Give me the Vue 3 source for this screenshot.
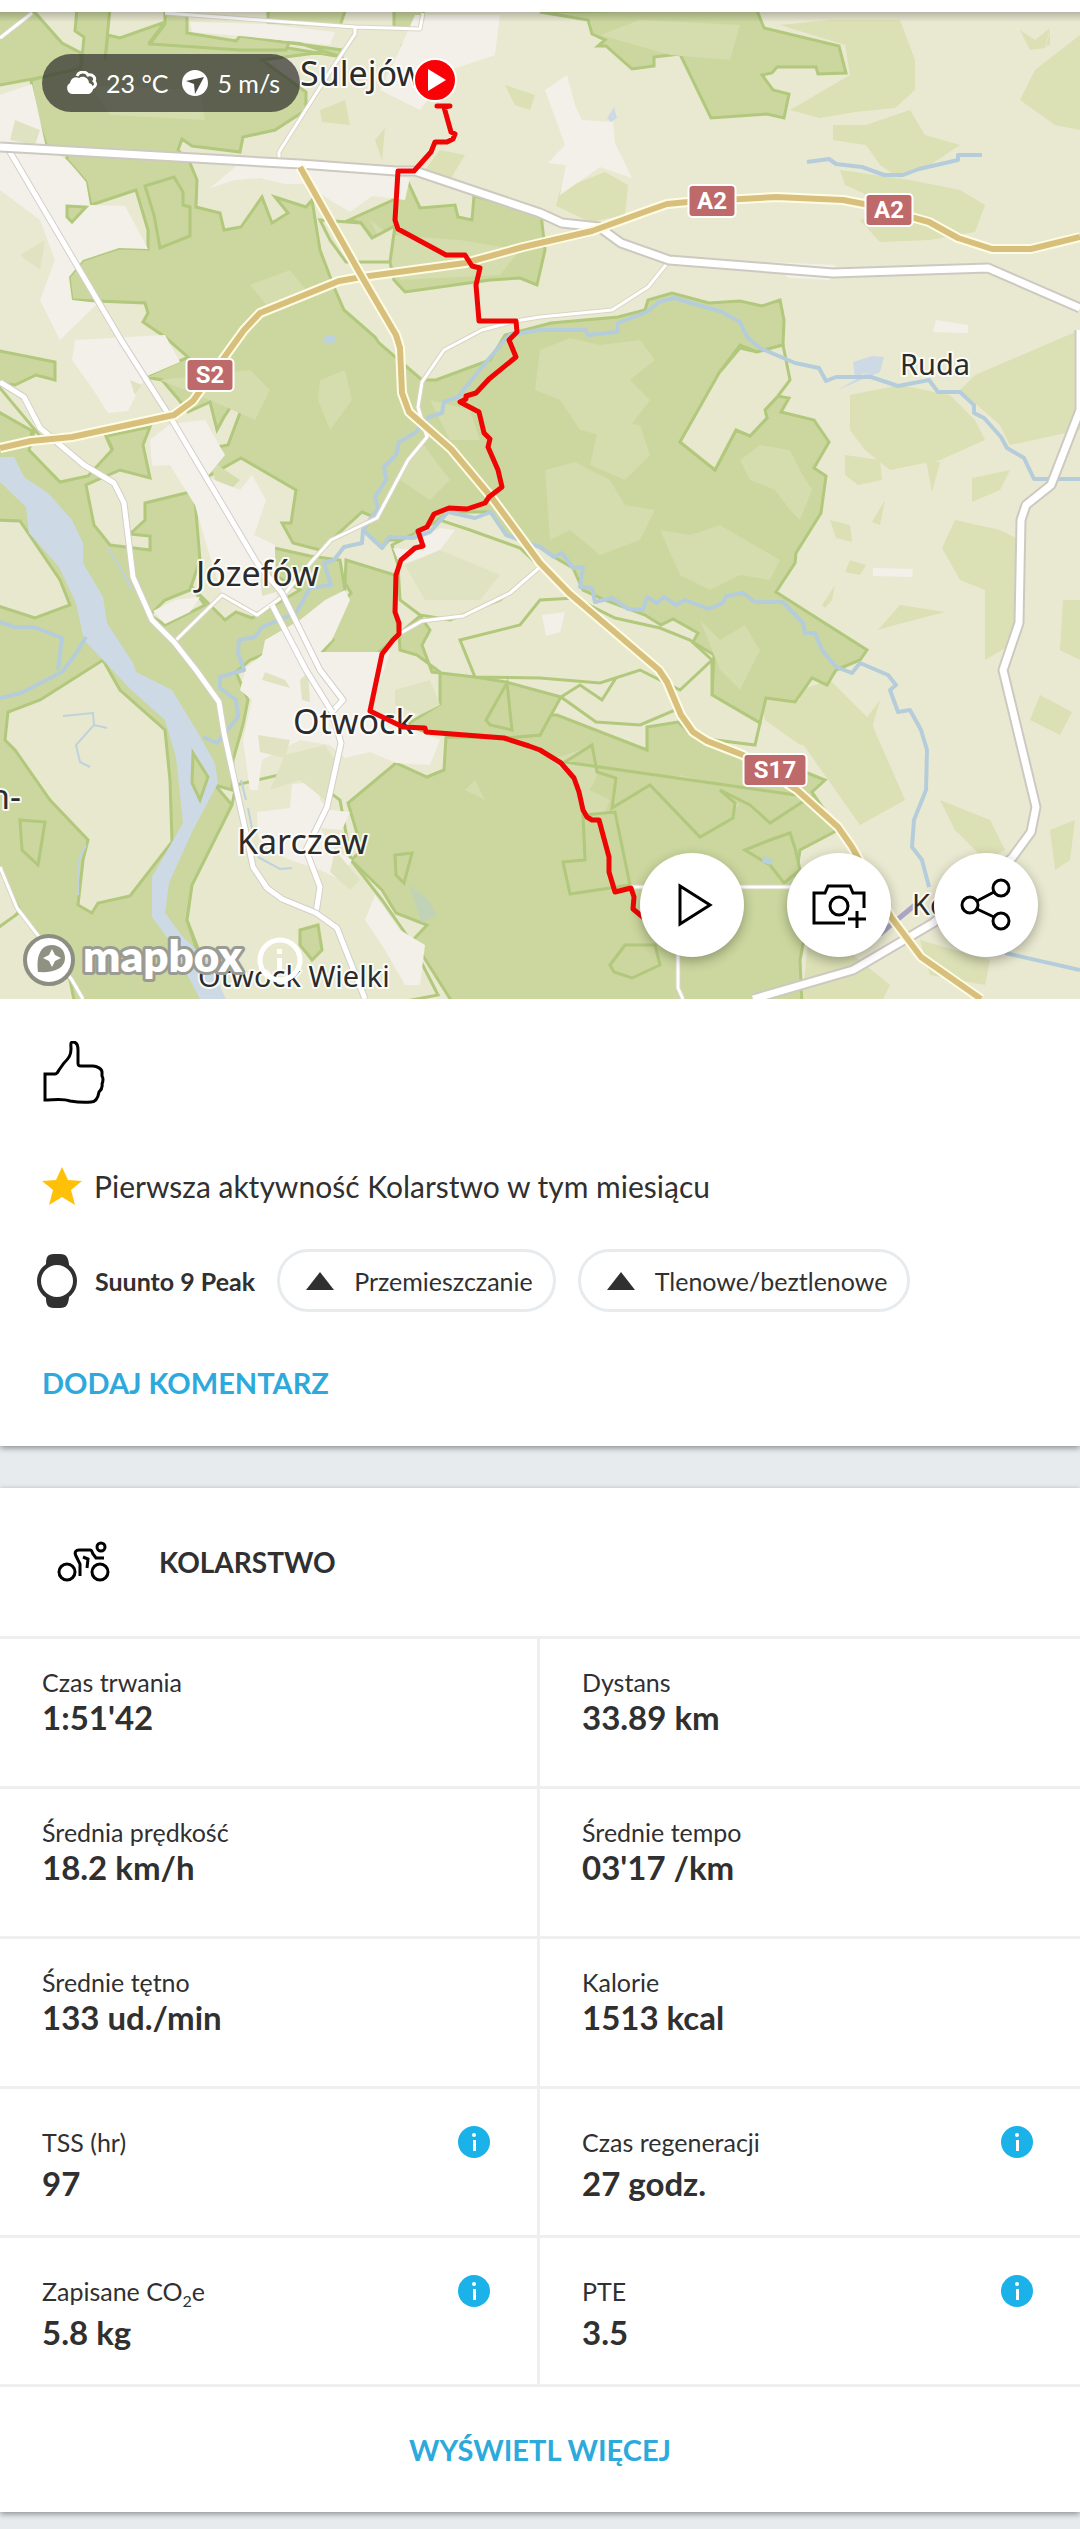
<script setup>
import { ref } from 'vue';

const weather = { temperature: '23 °C', wind: '5 m/s' };
const tags = ['Przemieszczanie', 'Tlenowe/beztlenowe'];
const liked = ref(false);

const stats = [
  { label: 'Czas trwania', value: "1:51'42" },
  { label: 'Dystans', value: '33.89 km' },
  { label: 'Średnia prędkość', value: '18.2 km/h' },
  { label: 'Średnie tempo', value: "03'17 /km" },
  { label: 'Średnie tętno', value: '133 ud./min' },
  { label: 'Kalorie', value: '1513 kcal' },
  { label: 'TSS (hr)', value: '97', info: true },
  { label: 'Czas regeneracji', value: '27 godz.', info: true },
  { label: 'Zapisane CO', sub: '2', tail: 'e', value: '5.8 kg', info: true },
  { label: 'PTE', value: '3.5', info: true }
];

// map layers, bottom to top
const forests = [
  '-5,8 31,8 62,43 81,53 81,70 -5,86',
  '77,8 75,31 84,37 81,68 31,80 35,110 46,145 67,150 67,160 76,170 86,182 91,205 136,190 148,230 148,249 119,248 83,260 69,277 72,300 145,303 148,313 143,322 165,337 188,357 145,377 162,380 179,400 188,412 210,402 217,430 224,417 234,402 241,410 228,445 217,447 207,477 241,458 296,490 291,523 282,523 293,543 320,550 362,512 374,517 363,530 382,548 389,540 414,540 448,512 490,512 506,535 540,547 554,557 573,568 583,590 605,600 645,615 661,625 673,619 698,633 693,642 714,655 712,695 760,723 766,698 795,702 812,678 827,685 836,670 860,660 867,650 776,592 795,563 796,553 821,513 826,476 814,468 829,442 814,420 781,412 789,398 778,396 765,410 767,418 750,436 736,430 715,470 680,442 700,413 719,373 740,345 757,352 783,345 784,320 780,300 762,306 740,301 709,303 672,293 648,300 645,310 618,317 551,323 505,335 490,360 436,380 422,380 379,343 375,337 344,310 334,287 320,250 312,200 306,207 275,197 288,213 272,223 262,197 241,227 224,230 220,213 196,207 197,180 190,163 178,150 182,139 192,146 240,152 243,137 275,130 306,110 306,92 262,60 339,50 342,57 240,40 240,47 150,42 165,22 120,38 108,35 105,60 110,8',
  '396,171 393,200 349,220 361,223 372,238 395,226 390,262 394,280 405,292 490,280 520,278 537,285 545,250 541,214 474,196 472,220 458,217 455,205 420,208 408,182 400,184',
  '187,8 187,33 236,41 240,36 342,50 338,56 290,40 286,50 240,50 150,44 165,24 165,8',
  '268,8 268,22 340,26 346,8',
  '394,8 394,27 421,28 424,8',
  '540,12 588,20 592,34 605,40 598,46 606,46 632,69 654,66 654,57 680,54 711,118 767,114 784,118 789,94 773,90 762,75 772,73 777,67 816,67 818,74 846,73 839,46 764,28 756,8',
  '396,763 427,777 444,770 446,737 504,738 540,735 548,715 557,715 647,750 647,727 678,722 693,735 743,757 800,770 825,780 812,792 838,830 800,850 795,883 809,913 800,960 802,1005 454,1005 413,940 427,925 396,913 382,890 351,860 362,850 348,803',
  '399,634 420,616 430,630 422,645 432,672 475,677 506,682 561,697 540,735 504,738 425,732 403,727 440,704 440,672 417,655 400,650',
  '346,560 395,575 395,612 399,634 376,655 332,676 320,655 333,640 322,625 351,593 345,583',
  '-5,350 55,362 55,380 36,375 15,385 -5,382',
  '-5,410 32,428 30,450 60,480 84,470 112,448 106,436 150,427 143,445 150,478 120,470 86,485 94,525 110,545 150,550 150,536 130,534 145,520 145,503 190,492 195,500 200,560 190,590 165,600 150,615 165,625 205,605 190,585 225,620 236,612 252,618 300,590 275,575 274,548 310,556 340,560 345,590 300,640 250,660 236,672 248,700 243,725 233,760 232,790 215,785 232,805 192,890 187,920 215,1005 -5,1005 -5,940 20,910 -5,860'
];

const meadows = [
  '-5,345 -5,410 34,432 29,450 60,482 88,476 112,450 104,432 40,436 -5,382',
  '-5,520 20,521 60,580 70,605 35,618 -5,605',
  '40,700 103,660 120,690 165,730 170,780 172,842 130,896 98,903 92,913 78,905 83,860 88,840 50,800 15,750 5,740 8,712',
  '232,805 236,785 300,770 340,800 351,860 382,900 410,940 438,995 385,1005 220,1005 187,920 192,885',
  '-5,930 20,912 70,980 75,1005 -5,1005',
  '392,545 440,520 470,530 520,548 540,567 500,600 450,620 420,615 400,600 398,565',
  '561,697 580,685 602,700 640,640 680,640 712,660 712,695 760,723 755,745 700,738 675,710 640,725 596,722',
  '460,640 520,625 540,600 575,598 615,618 660,628 690,640 712,660 680,690 640,670 600,683 540,678 475,677',
  '680,442 719,373 740,348 757,352 783,345 790,380 778,396 765,410 767,418 750,436 736,430 715,470',
  '320,220 361,223 372,238 395,226 390,262 346,262 330,240'
];

const towns = [
  '0,95 32,84 40,120 46,148 67,160 76,170 86,182 90,205 125,206 148,249 119,248 83,260 69,277 72,300 98,303 60,340 40,300 55,260 40,220 0,190',
  '75,340 165,335 180,362 145,377 128,411 108,413 90,385 72,360',
  '150,440 170,424 205,420 222,450 225,455 207,477 240,490 252,475 266,500 254,535 275,545 277,600 255,612 222,594 205,540 195,505 170,465 152,466',
  '153,611 175,600 200,597 190,612 165,624',
  '300,620 325,600 345,590 350,600 332,640 320,652 390,652 370,711 440,740 430,765 396,763 370,752 345,758 330,745 300,740 262,760 258,790 250,790 243,740 252,700 240,690 246,668 262,655 265,640',
  '292,784 318,782 320,800 330,810 350,812 342,830 320,828 335,850 352,860 340,880 320,870 290,860 270,850 258,835 257,812 290,808',
  '375,895 400,930 425,945 420,985 405,985 385,950 365,920',
  '415,15 500,15 495,55 450,70 420,110 380,90 395,60',
  '240,163 300,166 410,178 405,200 372,196 350,212 330,200 306,184 285,184 260,178 235,180 210,188',
  '190,22 265,24 335,32 330,45 240,36 192,32',
  '545,90 567,75 575,105 582,120 613,122 615,143 632,178 600,167 560,195 566,165 548,163 565,145',
  '770,262 836,265 830,280 789,278',
  '936,320 968,325 968,333 933,332',
  '393,548 415,550 420,538 440,528 455,530 440,550 415,560 400,565',
  '542,615 565,612 560,632 546,636',
  '912,577 913,569 873,568 873,576'
];

// scattered scrubland
const scrub = [
  '780,25 830,20 900,20 915,60 915,90 895,108 855,112 820,118 790,110 850,75 845,45',
  '866,125 910,110 925,135 960,145 930,165 900,178 880,165 866,145 833,140 833,125',
  '840,170 910,180 960,190 985,205 975,232 930,240 880,242 860,220 900,210 845,185',
  '560,190 605,172 628,185 625,215 590,222 556,206',
  '850,395 900,385 950,395 975,420 985,440 940,460 890,470 865,450 850,430',
  '975,375 1080,330 1080,430 1010,445 1000,425 960,390',
  '955,520 1000,530 1020,540 1019,640 985,660 985,590 960,580 942,548',
  '1063,600 1080,600 1080,660 1060,650',
  '1035,70 1080,35 1080,130 1055,125 1020,100',
  '830,520 850,525 852,542 836,538',
  '845,455 880,460 882,480 858,485 845,475',
  '885,500 880,525 872,522',
  '926,460 940,462 932,492',
  '972,478 1010,470 1000,490 972,502',
  '850,560 866,565 860,575 845,572',
  '822,605 835,585 832,600 825,608',
  '878,630 900,605 945,612 895,625',
  '1040,695 1072,712 1060,735 1030,720',
  '800,690 830,680 870,720 905,800 860,825 800,740',
  '760,690 800,700 830,740 800,745 765,720',
  '850,740 880,700 870,735 860,750',
  '940,800 990,820 1005,850 985,860 955,830',
  '1050,830 1075,820 1070,860 1055,870',
  '920,940 990,960 985,985 930,975',
  '810,920 890,985 880,1005 802,1005',
  '1040,35 1046,48 1050,30 1050,45 1042,48',
  '1020,30 1035,40 1050,28 1045,48 1030,50',
  '400,45 412,35 428,42 420,65 405,60',
  '320,110 345,100 350,125 322,122',
  '440,150 465,155 450,180 425,170',
  '375,140 385,128 382,160',
  '505,85 535,95 530,110 515,105'
];

const clearings = [
  '160,380 250,370 270,390 255,420 210,400',
  '90,85 200,90 205,120 110,115',
  '120,340 160,345 175,360 145,372',
  '320,380 345,370 352,400 330,430 318,400',
  '430,400 470,410 480,440 450,440',
  '540,350 570,338 600,345 640,340 655,360 630,380 650,400 620,440 580,430 560,400 535,390',
  '545,470 575,462 610,480 625,505 655,510 640,540 600,555 570,530 550,540',
  '660,530 690,535 720,525 780,560 770,580 740,575 710,590 680,575',
  '740,460 760,445 790,450 800,470 812,490 800,520 790,510 775,490 750,480',
  '700,620 720,640 745,625 760,650 740,690 720,670',
  '580,650 620,640 650,660 600,680',
  '550,760 580,750 600,770 590,790 610,800 600,825 585,815 575,780',
  '655,790 680,775 700,780 740,805 700,832 680,805',
  '600,420 640,425 650,455 625,480 590,465',
  '475,780 485,800 465,790',
  '640,20 740,25 730,60 670,55 600,35',
  '420,440 450,480 430,500 400,480',
  '370,220 390,235 460,240 520,250 500,275 400,280',
  '250,285 290,270 310,295 270,310',
  '120,780 150,770 150,830 130,860',
  '210,460 240,480 220,500'
];

const woods = [
  '145,186 174,177 183,192 183,205 190,207 190,236 160,248 154,215',
  '67,206 86,207 72,222 67,217',
  '745,850 770,840 790,833 795,848 800,870 784,883 770,865',
  '610,965 625,945 655,945 660,965 632,978 614,972',
  '565,762 592,745 597,772 616,778 612,808 650,785 700,837 733,818 735,803 720,790 750,805 770,823 810,797',
  '563,862 585,860 583,815 615,812 630,885 570,894',
  '486,720 507,683 512,730 490,725',
  '300,930 318,925 322,950 312,960 300,945',
  '20,820 45,822 38,865 22,850',
  '395,855 412,853 404,883 396,875'
];

// greens inside built-up areas
const parks = [
  '265,672 285,680 290,688 262,680',
  '300,680 308,672 310,702 302,700',
  '258,735 290,740 285,758 260,752',
  '285,755 325,745 335,760 325,800 300,780 270,790',
  '335,850 360,880 350,890 330,872',
  '395,690 430,680 440,705 420,715 395,705',
  '260,575 272,570 276,592 262,596',
  '405,565 440,550 500,575 480,600 425,600',
  '20,255 45,240 40,270',
  '130,380 142,385 135,395',
  '15,120 40,130 35,145 10,140'
];

const rivers = [
  'M0 622 14 627 34 627 62 638 58 670M0 698 21 693 62 672 75 655 86 637',
  'M1080 479H1034L1024 458 1007 448 1001 437 984 418 974 413V405L960 392H938L929 380 898 386 871 377H836L826 381 819 368 795 363 760 348 747 337 740 322 722 312 674 298 659 302 647 312 618 323 617 332 588 335 586 330H540L510 335 503 342 482 367 458 397 444 402 442 413 429 417 415 433 399 442 396 455 384 467 386 480 375 497 378 508 363 530 362 543 344 547 334 560 324 563 331 585 310 588 296 613 262 627 255 637 239 640 238 653 244 670 220 677V688L236 700 238 717 217 743 203 737',
  'M363 530 382 548 389 537 413 538 430 532 448 512 475 518 491 512 506 535 540 547 554 557 562 553 573 568 583 567 580 587 592 588 595 602 612 598 628 609 643 610 647 597 657 603 664 597 676 605 685 600 709 609 723 603 726 596 743 593 755 602H783L803 623 805 633H815L822 650 836 667 852 673 860 663 888 675 896 685 890 690 898 712 910 710 921 730 927 750 926 790 914 820 912 847 922 860 929 887',
  'M807 162 829 159 836 164 862 167 884 175H903L919 169 958 160V155H982',
  'M1005 953 1080 970'
];

const streams = [
  'M63 716 93 713 94 725 76 745 80 762 90 767M94 725 107 728',
  'M241 780 246 800M248 808 252 828M258 857 280 869 292 868',
  'M86 845 78 862V895',
  'M108 548 122 570 132 590'
];

const thinRoads = [
  'M0 38 32 13M165 13 355 27 420 29 423 13M355 27V34L331 70 279 152V162',
  'M174 642 222 595 257 615 282 597 313 560 331 540 377 518 408 460 427 437 418 407 422 382 444 350 482 330 516 321 540 317 612 310 648 287 669 261',
  'M399 634 422 621 463 616 510 593 540 567',
  'M0 867 17 908 72 980 83 999',
  'M630 887H836M678 953V988L683 999'
];

const railways = [
  'M7 147 121 340 172 420 257 563 282 593 320 670 343 700 332 712 341 743 327 807 306 850 320 887 316 913',
  'M272 605 306 670 332 712',
  'M0 382 24 397 40 428 84 465 114 483 124 503 133 577 152 620 174 642 196 670 219 702 224 733 246 833 253 867 267 888 282 899 316 913 337 928 365 999'
];

const roads = [
  'M0 147 300 164 396 171H415L540 213 562 223 599 227 621 243 669 260 833 273 988 268 1080 308',
  'M1080 330V410L1051 485 1026 505 1021 520 1019 623 1003 670 1036 807 1031 832 1012 858 933 923 853 970 753 999'
];

const motorways = [
  'M0 448 31 441 72 437 174 415 193 401 210 377 244 330 260 313 339 281 362 277 465 263 523 247 592 231 647 211 667 204 688 202 776 197 843 200 864 204 929 222 958 238 992 249H1031L1080 237',
  'M300 167 362 277 396 335 400 348 402 393 409 412 451 449 492 498 540 563 569 593 659 670 667 682 681 715 693 732 707 741 743 755 797 790 838 827 852 847 891 917 921 957 981 999'
];

const route = '437,106 450,106 444,107 451,132 455,134 453,139 447,142 435,142 431,152 414,171 398,171 395,220 398,229 446,255 465,255 472,266 480,268 476,285 479,321 516,321 517,332 509,340 516,357 489,379 476,393 466,396 466,399 460,402 479,412 484,433 490,439 488,447 498,470 502,487 489,497 485,503 467,509 449,508 434,514 427,527 418,531 423,546 415,548 401,560 396,575 395,612 399,623 399,634 393,640 382,654 370,711 403,727 425,728 426,732 504,738 529,746 540,750 561,763 574,778 579,792 583,810 587,817 592,820 599,820 609,857 609,872 615,892 631,888 634,897 633,909 650,923';

const shields = [
  { x: 712, y: 201, w: 47, name: 'A2' },
  { x: 889, y: 210, w: 47, name: 'A2' },
  { x: 210, y: 375, w: 47, name: 'S2' },
  { x: 775, y: 770, w: 63, name: 'S17' }
];

const places = [
  { x: 300, y: 86, size: 34, name: 'Sulejów' },
  { x: 196, y: 586, size: 34, name: 'Józefów' },
  { x: 293, y: 734, size: 34, name: 'Otwock' },
  { x: 237, y: 854, size: 34, name: 'Karczew' },
  { x: -11, y: 809, size: 34, name: 'n-' },
  { x: 900, y: 375, size: 29, name: 'Ruda' },
  { x: 198, y: 987, size: 29, name: 'Otwock Wielki' },
  { x: 912, y: 915, size: 29, name: 'Ko' }
];
</script>

<template>
  <main class="page">
    <article class="card">
      <section class="map">
        <svg class="map-canvas" viewBox="0 12 1080 987" role="img" aria-label="Mapa trasy">
          <rect y="12" width="1080" height="987" fill="#e9e9d1" />
          <polygon v-for="(p, i) in scrub" :key="'s' + i" :points="p" fill="#dbe0b5" />
          <polygon v-for="(p, i) in forests" :key="'f' + i" :points="p" class="forest" />
          <polygon v-for="(p, i) in clearings" :key="'c' + i" :points="p" fill="#d5dcae" />
          <polygon v-for="(p, i) in meadows" :key="'m' + i" :points="p" class="meadow" />
          <polygon v-for="(p, i) in towns" :key="'t' + i" :points="p" fill="#f3f0ea" />
          <polygon v-for="(p, i) in parks" :key="'p' + i" :points="p" fill="#dfe3c2" />
          <polygon v-for="(p, i) in woods" :key="'w' + i" :points="p" class="forest" />

          <!-- river with its island -->
          <polygon
            points="0,457 14,457 24,477 48,493 72,520 83,543 83,563 103,597 107,623 133,663 136,672 172,690 198,733 215,763 218,783 193,830 169,883 165,913 183,937 207,960 226,999 200,999 169,940 152,917 152,877 183,823 176,757 165,720 131,690 103,660 84,640 76,603 59,567 29,533 26,507 0,482"
            fill="#cddae6"
          />
          <polygon points="193,753 208,777 200,800 192,783" class="forest" />
          <polygon points="838,390 880,372 884,357 872,356 853,362 855,377 868,372" fill="#cddae6" />
          <polygon points="607,118 614,107 617,118 611,122" fill="#cddae6" />
          <polygon points="763,856 773,860 770,865 762,862" fill="#b8d0dc" />
          <polygon points="325,335 337,335 334,343 323,344" fill="#bdd2da" />
          <polygon points="409,885 428,900 437,915 422,923" fill="#c0d3b6" />
          <path v-for="(d, i) in rivers" :key="'r' + i" :d="d" class="river" />
          <path v-for="(d, i) in streams" :key="'k' + i" :d="d" class="stream" />

          <g v-for="(d, i) in thinRoads" :key="'n' + i">
            <path :d="d" class="road" stroke="#d9d5c4" stroke-width="5" />
            <path :d="d" class="road" stroke="#fff" stroke-width="3" />
          </g>
          <g v-for="(d, i) in railways" :key="'l' + i">
            <path :d="d" class="road" stroke="#d3cfc9" stroke-width="7" />
            <path :d="d" class="road" stroke="#fff" stroke-width="5" />
          </g>
          <g v-for="(d, i) in roads" :key="'o' + i">
            <path :d="d" class="road" stroke="#cdc9c1" stroke-width="11" />
            <path :d="d" class="road" stroke="#fff" stroke-width="7" />
          </g>
          <path d="M880 934 915 905" stroke="#aaa5c4" stroke-width="5" />
          <g v-for="(d, i) in motorways" :key="'h' + i">
            <path :d="d" class="road" stroke="#fffce6" stroke-width="10" />
            <path :d="d" class="road" stroke="#d8c07c" stroke-width="6" />
          </g>

          <g v-for="(s, i) in shields" :key="'b' + i">
            <rect :x="s.x - s.w / 2" :y="s.y - 16" :width="s.w" height="32" rx="4" class="shield" />
            <text :x="s.x" :y="s.y + 8" class="shield-text">{{ s.name }}</text>
          </g>
          <text
            v-for="p in places"
            :key="p.name"
            :x="p.x"
            :y="p.y"
            :font-size="p.size"
            class="place"
          >{{ p.name }}</text>

          <polyline :points="route" class="route" />
          <circle cx="435" cy="80" r="21" fill="#fb0007" stroke="#fff" stroke-width="2" />
          <path d="M428 69v22l18-11z" fill="#fff" />

          <!-- map attribution -->
          <circle cx="49" cy="960" r="24" fill="#fff" stroke="#8c8e82" stroke-width="4" />
          <path d="M38 972c-2-15 2-27 14-27 7 0 13 5 13 13 0 10-10 15-27 14z" fill="#8f9283" />
          <path d="M52 949l3 6 6 3-6 3-3 6-3-6-6-3 6-3z" fill="#fff" />
          <text x="83" y="972" class="brand">mapbox</text>
          <circle cx="280" cy="960" r="20" fill="none" stroke="#fff" stroke-width="5" />
          <path d="M277 949h5v5h-5zM277 958h5v13h-5z" fill="#fff" />

          <defs>
            <linearGradient id="map-shade" x2="0" y2="1">
              <stop offset="0" stop-color="#000" stop-opacity=".22" />
              <stop offset="1" stop-color="#000" stop-opacity="0" />
            </linearGradient>
          </defs>
          <rect y="12" width="1080" height="10" fill="url(#map-shade)" />
        </svg>

        <div class="weather">
          <svg width="32" height="24" viewBox="0 0 32 24" fill="#fff" aria-hidden="true">
            <path d="M6 23a6 6 0 0 1-2-11c1-5 5-7 9-5 4-3 10 0 10 5 5 1 6 9 0 11z" />
            <path
              d="M11 5c2-5 9-5 11-1 5-1 8 3 6 6 3 3 1 6-2 7"
              fill="none"
              stroke="#fff"
              stroke-width="3"
            />
          </svg>
          <span>{{ weather.temperature }}</span>
          <svg class="wind" width="27" height="27" viewBox="0 0 27 27" aria-hidden="true">
            <circle cx="13" cy="13" r="13" fill="#fff" />
            <path d="M4 11l18-4-9 17-1-10z" fill="#4c4e42" />
          </svg>
          <span>{{ weather.wind }}</span>
        </div>

        <div class="map-actions">
          <button type="button" class="round" aria-label="Odtwórz">
            <svg width="56" height="56" viewBox="0 0 56 56">
              <path d="M16 9v38l30-19z" />
            </svg>
          </button>
          <button type="button" class="round" aria-label="Dodaj zdjęcie">
            <svg width="56" height="56" viewBox="0 0 56 56">
              <path d="M34 46H3V16h11l3-7h22l3 7h11v15" />
              <circle cx="28" cy="29" r="9" />
              <path d="M46 34v17M37 42h18" />
            </svg>
          </button>
          <button type="button" class="round" aria-label="Udostępnij">
            <svg width="56" height="56" viewBox="0 0 56 56">
              <circle cx="12" cy="28" r="8" />
              <circle cx="43" cy="11" r="8" />
              <circle cx="43" cy="44" r="8" />
              <path d="M19 24l17-9M19 32l17 8" />
            </svg>
          </button>
        </div>
      </section>

      <div class="summary">
        <button type="button" class="like" aria-label="Lubię to" :aria-pressed="liked" @click="liked = !liked">
          <svg width="64" height="64" viewBox="0 0 64 64">
            <path
              d="M3 33h10c2 0 3-2 4-4l5-7c5-5 7-8 7-14 0-4-1-7 2-7 4 0 5 4 5 8v13c0 2 0 3 3 3h12c4 0 9 3 9 6v4c2 3 1 5 0 8 1 4-1 6-3 8-1 6-3 10-8 10-9 1-15 0-21-1-8-3-17-1-25-1z"
            />
          </svg>
        </button>

        <p class="highlight">
          <svg width="40" height="38" viewBox="0 0 40 38" aria-hidden="true">
            <path d="M20 0l6 13 14 1-11 9 4 15-13-8-13 8 4-15L0 14l14-1z" fill="#ffc107" />
          </svg>
          <span>Pierwsza aktywność Kolarstwo w tym miesiącu</span>
        </p>

        <div class="device">
          <svg class="watch" width="40" height="54" viewBox="0 0 40 54" aria-hidden="true">
            <path
              d="M9 10c0-6 1-10 8-10h6c7 0 8 4 9 10v34c-1 6-2 10-9 10h-6c-7 0-8-4-8-10z"
              fill="#303030"
            />
            <circle cx="20" cy="27" r="18" fill="#fff" stroke="#303030" stroke-width="4" />
          </svg>
          <strong>Suunto 9 Peak</strong>
          <span v-for="tag in tags" :key="tag" class="chip">
            <svg width="28" height="18" viewBox="0 0 28 18" aria-hidden="true">
              <path d="M0 18L14 0l14 18z" fill="#303030" />
            </svg>
            {{ tag }}
          </span>
        </div>

        <button type="button" class="link-btn">DODAJ KOMENTARZ</button>
      </div>
    </article>

    <article class="card">
      <header class="sport">
        <svg width="54" height="42" viewBox="0 0 54 42" aria-hidden="true">
          <circle cx="10" cy="31" r="8" />
          <circle cx="43" cy="31" r="8" />
          <circle cx="44" cy="6" r="4" />
          <path d="M23 35V23l-4-8c-2-4 0-6 3-6h11c2 0 2 2 3 4l3 4h8M26 16l5 2-1 9" />
        </svg>
        <h2>KOLARSTWO</h2>
      </header>

      <dl class="stats">
        <div v-for="s in stats" :key="s.label" :class="['stat', { 'with-info': s.info }]">
          <dt>{{ s.label }}<sub v-if="s.sub">{{ s.sub }}</sub>{{ s.tail }}</dt>
          <dd>{{ s.value }}</dd>
          <button v-if="s.info" type="button" class="info" :aria-label="'Informacje: ' + s.label">
            <svg width="32" height="32" viewBox="0 0 32 32">
              <circle cx="16" cy="16" r="16" fill="#1ab2e8" />
              <circle cx="16" cy="9" r="2" fill="#fff" />
              <path d="M15 14h3v11h-3z" fill="#fff" />
            </svg>
          </button>
        </div>
      </dl>

      <button type="button" class="link-btn more">WYŚWIETL WIĘCEJ</button>
    </article>
  </main>
</template>

<style>
body {
  margin: 0;
  background: #e7ebee;
}
</style>

<style scoped>
.page {
  display: flex;
  flex-direction: column;
  gap: 42px;
  padding-bottom: 17px;
  color: #303030;
  font-family: Lato, "Liberation Sans", sans-serif;
  font-size: 25px;
}

.card {
  background: #fff;
  box-shadow: 0 2px 6px rgba(0, 0, 0, 0.4);
}

button {
  padding: 0;
  border: none;
  background: none;
  color: inherit;
  font: inherit;
  cursor: pointer;
}

svg {
  display: block;
  flex: none;
}

.map {
  position: relative;
  padding-top: 12px;
}

.map-canvas {
  width: 100%;
  height: auto;
}

.forest {
  fill: #cbd79e;
  stroke: #b2c87c;
  stroke-width: 3;
}

.meadow {
  fill: #e7e8cd;
  stroke: #b2c87c;
  stroke-width: 3;
}

.river {
  fill: none;
  stroke: #b5cddb;
  stroke-width: 4;
  stroke-linejoin: round;
}

.stream {
  fill: none;
  stroke: #bfd2de;
  stroke-width: 2;
}

.road {
  fill: none;
  stroke-linejoin: round;
}

.route {
  fill: none;
  stroke: #ee0605;
  stroke-width: 5;
  stroke-linejoin: round;
  stroke-linecap: round;
}

.shield {
  fill: #bf6a6a;
  stroke: #fff;
  stroke-width: 2;
}

.shield-text {
  fill: #fff;
  font-family: Roboto, sans-serif;
  font-size: 24px;
  font-weight: 700;
  text-anchor: middle;
}

.place {
  fill: #2b2b2b;
  stroke: rgba(255, 255, 255, 0.85);
  stroke-width: 4;
  stroke-linejoin: round;
  paint-order: stroke;
  font-family: "Noto Sans", sans-serif;
}

.brand {
  fill: #fff;
  stroke: #9a9c94;
  stroke-width: 6;
  stroke-linejoin: round;
  paint-order: stroke;
  font-size: 44px;
  font-weight: 800;
}

.weather {
  position: absolute;
  top: 54px;
  left: 42px;
  display: flex;
  align-items: center;
  gap: 8px;
  height: 58px;
  padding: 0 20px 0 24px;
  border-radius: 29px;
  background: rgba(46, 46, 46, 0.7);
  color: #fff;
}

.wind {
  margin-left: 6px;
}

.map-actions {
  position: absolute;
  right: 42px;
  bottom: 42px;
  display: flex;
  gap: 43px;
}

.round {
  display: grid;
  place-items: center;
  width: 104px;
  height: 104px;
  border-radius: 50%;
  background: #fff;
  box-shadow: 0 4px 12px rgba(0, 0, 0, 0.3);
}

.round svg,
.like svg,
.sport svg {
  fill: none;
  stroke: #000;
  stroke-width: 3;
}

.summary {
  display: flex;
  flex-direction: column;
  align-items: flex-start;
  padding: 42px;
}

.highlight {
  display: flex;
  align-items: center;
  gap: 12px;
  margin: 60px 0 42px;
  font-size: 30px;
  line-height: 42px;
}

.device {
  display: flex;
  align-items: center;
  flex-wrap: wrap;
  gap: 22px;
  margin-bottom: 50px;
}

.watch {
  margin: 0 -4px 0 -5px;
}

.chip {
  display: flex;
  align-items: center;
  gap: 20px;
  box-sizing: border-box;
  height: 63px;
  padding: 0 20px 0 26px;
  border: 3px solid #e8ebee;
  border-radius: 32px;
}

.link-btn {
  color: #2da9dc;
  font-size: 29px;
  font-weight: 700;
  line-height: 42px;
}

.sport {
  display: flex;
  align-items: center;
  gap: 48px;
  height: 148px;
  padding: 0 57px;
}

h2 {
  margin: 0;
  font-size: 28px;
  font-weight: 700;
}

.stats {
  display: grid;
  grid-template-columns: 1fr 1fr;
  margin: 0;
  border-bottom: 3px solid #efefef;
}

.stat {
  position: relative;
  box-sizing: border-box;
  height: 150px;
  padding: 28px 42px 0;
  border-top: 3px solid #efefef;
}

.stat:nth-child(odd) {
  border-right: 3px solid #efefef;
}

.stat.with-info {
  height: 149px;
  padding-top: 38px;
}

dt {
  line-height: 30px;
}

dd {
  margin: 0;
  font-size: 33px;
  font-weight: 700;
  line-height: 40px;
}

.with-info dd {
  margin-top: 6px;
}

sub {
  font-size: 16px;
  line-height: 0;
}

.info {
  position: absolute;
  top: 37px;
  right: 47px;
}

.more {
  width: 100%;
  height: 125px;
}
</style>
